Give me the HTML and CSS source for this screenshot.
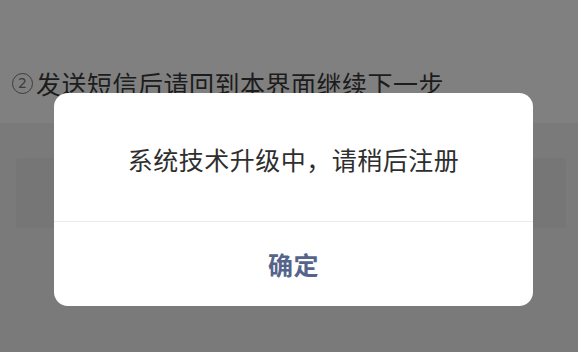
FILE: index.html
```html
<!DOCTYPE html>
<html lang="zh-CN">
<head>
<meta charset="utf-8">
<title>提示</title>
<link rel="stylesheet" href="styles.css">
</head>
<body>
<div class="page">
  <section class="top">
    <p class="step"><span class="num">2</span>发送短信后请回到本界面继续下一步</p>
  </section>
  <section class="lower">
    <div class="ghost-box"></div>
  </section>
  <div class="dialog" role="dialog">
    <div class="dialog-body">系统技术升级中，请稍后注册</div>
    <div class="dialog-footer">确定</div>
  </div>
</div>
</body>
</html>
```

FILE: styles.css
```css
html, body {
  margin: 0;
  padding: 0;
}
body {
  width: 578px;
  height: 352px;
  overflow: hidden;
  background: #7a7a7a;
  font-family: "Noto Sans CJK SC", "Noto Sans", sans-serif;
}
.page {
  position: relative;
  width: 578px;
  height: 352px;
}
.top {
  height: 123px;
  background: #808080;
  box-sizing: border-box;
  padding: 70px 0 0 12px;
}
.step {
  margin: 0;
  display: flex;
  align-items: center;
  font-size: 25px;
  line-height: 26px;
  letter-spacing: 0.5px;
  color: #1c1c1c;
}
.num {
  display: inline-flex;
  align-items: center;
  justify-content: center;
  width: 19px;
  height: 19px;
  border: 1.5px solid #3c3c3c;
  border-radius: 50%;
  font-size: 14px;
  line-height: 1;
  letter-spacing: 0;
  color: #3c3c3c;
  margin-right: 3px;
  font-family: "DejaVu Sans", sans-serif;
}
.lower {
  padding: 35px 12px 0 16px;
}
.ghost-box {
  height: 70px;
  background: #767676;
  border-radius: 4px;
}
.dialog {
  position: absolute;
  left: 54px;
  top: 93px;
  width: 479px;
  height: 213px;
  background: #ffffff;
  border-radius: 14px;
  display: flex;
  flex-direction: column;
  overflow: hidden;
}
.dialog-body {
  height: 129px;
  box-sizing: border-box;
  padding-top: 53px;
  text-align: center;
  font-size: 25px;
  line-height: 26px;
  letter-spacing: 0.5px;
  color: #2e2e2e;
  border-bottom: 1px solid #ebebeb;
}
.dialog-footer {
  flex: 1;
  display: flex;
  align-items: center;
  justify-content: center;
  font-size: 25px;
  font-weight: 700;
  letter-spacing: 0.5px;
  color: #56648c;
}
```
